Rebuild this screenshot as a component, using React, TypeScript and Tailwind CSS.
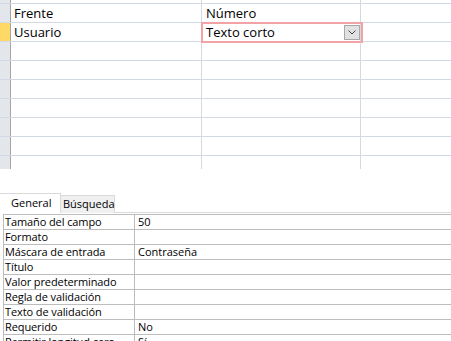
const sheetRows = [
  { name: 'Frente', type: 'Número' },
  { name: 'Usuario', type: 'Texto corto', current: true },
  {}, {}, {}, {}, {}, {},
]

const props = [
  ['Tamaño del campo', '50'],
  ['Formato', ''],
  ['Máscara de entrada', 'Contraseña'],
  ['Título', ''],
  ['Valor predeterminado', ''],
  ['Regla de validación', ''],
  ['Texto de validación', ''],
  ['Requerido', 'No'],
  ['Permitir longitud cero', 'Sí'],
]

function SheetRow({ name, type, current }: { name?: string; type?: string; current?: boolean }) {
  return (
    <div className="flex h-[19px] border-b border-[#d3d9e3]">
      <div className={`w-[10px] shrink-0 ${current ? 'bg-[#ffd866]' : 'bg-[#e3e6eb]'}`} />
      <div className="w-[1px] shrink-0 bg-[#a6a6a6]" />
      <div className="w-[191px] shrink-0 border-r border-[#d3d9e3] pl-[3px] text-[13px] leading-[18px]">{name}</div>
      <div className="relative w-[159px] shrink-0 border-r border-[#d3d9e3] pl-[4px] text-[13px] leading-[18px]">
        {current && (
          <div className="absolute -left-[1px] -top-[1px] h-[21px] w-[162px] border-2 border-[#f2a3a6]">
            <div className="absolute right-[1px] top-[1px] flex h-[15px] w-[16px] items-center justify-center border border-[#a9a9a9] bg-[#e1e1e1]">
              <svg width="8" height="5" viewBox="0 0 8 5">
                <path d="M0.5 0.5 L4 4 L7.5 0.5" fill="none" stroke="#444" strokeWidth="1" />
              </svg>
            </div>
          </div>
        )}
        <span className="relative">{type}</span>
      </div>
      <div className="flex-1" />
    </div>
  )
}

export default function App() {
  return (
    <div className="h-[341px] w-[451px] overflow-hidden bg-white text-black" style={{ fontFamily: '"Open Sans", sans-serif' }}>
      {/* datasheet */}
      <div className="h-[168px]">
        <div className="flex h-[4px] border-b border-[#d3d9e3]">
          <div className="w-[10px] bg-[#e3e6eb]" />
          <div className="w-[1px] bg-[#a6a6a6]" />
          <div className="w-[191px] border-r border-[#d3d9e3]" />
          <div className="w-[159px] border-r border-[#d3d9e3]" />
        </div>
        {sheetRows.map((r, i) => (
          <SheetRow key={i} {...r} />
        ))}
        <div className="flex h-[13px]">
          <div className="w-[10px] bg-[#e3e6eb]" />
          <div className="w-[1px] bg-[#a6a6a6]" />
          <div className="w-[191px] border-r border-[#d3d9e3]" />
          <div className="w-[159px] border-r border-[#d3d9e3]" />
        </div>
      </div>

      {/* tabs */}
      <div className="mt-[25px] flex h-[20px] items-end">
        <div className="flex h-[20px] w-[61px] items-center border-r border-t border-[#d9d9d9] pl-[11px] text-[11px]">General</div>
        <div className="flex h-[18px] w-[54px] items-center border-r border-t border-[#d9d9d9] bg-[#f0f0f0] pl-[2px] text-[11px]">Búsqueda</div>
        <div className="flex-1 self-end border-b border-[#d9d9d9]" />
      </div>

      {/* property grid */}
      <div className="ml-[3px] mt-[1px] border-l border-t border-[#bdbdbd] text-[11px]">
        {props.map(([label, value]) => (
          <div key={label} className="flex h-[15px] border-b border-[#bdbdbd] leading-[14px]">
            <div className="w-[131px] shrink-0 border-r border-[#bdbdbd] pl-[1px] tracking-[-0.1px]">{label}</div>
            <div className="flex-1 pl-[3px]">{value}</div>
          </div>
        ))}
      </div>
    </div>
  )
}
